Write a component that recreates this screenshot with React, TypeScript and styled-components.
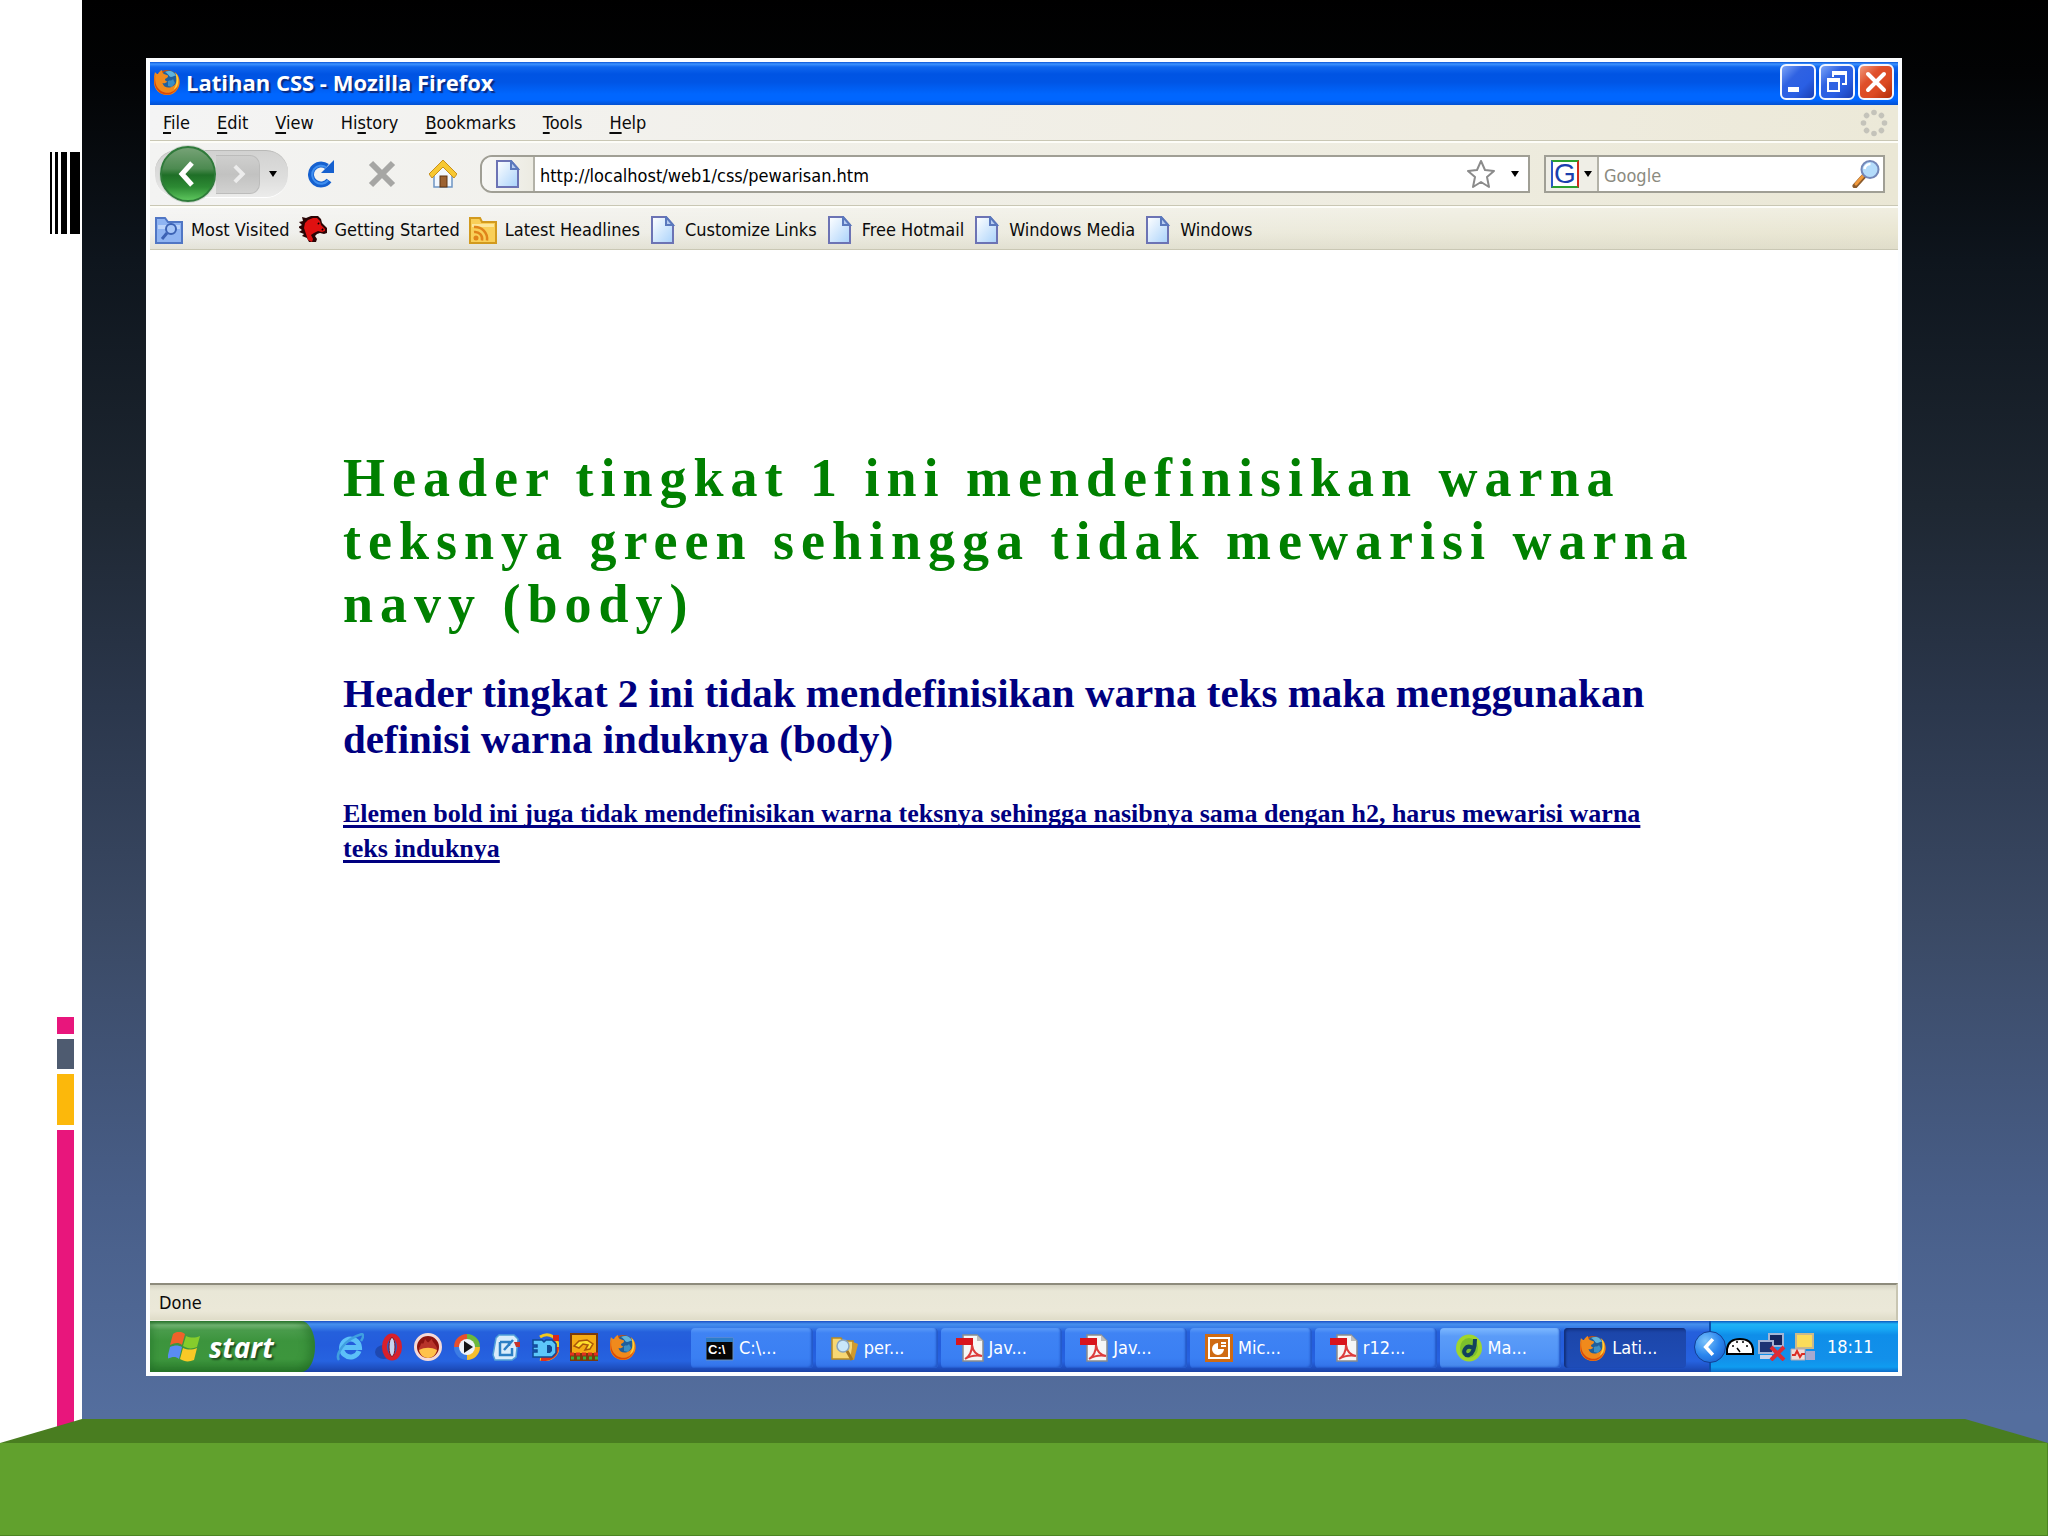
import React from 'react';
import styled, { createGlobalStyle, css } from 'styled-components';

const uiFont = '"DejaVu Sans Condensed", "DejaVu Sans", sans-serif';

const GlobalStyle = createGlobalStyle`
  *, *::before, *::after { box-sizing: border-box; }
  html, body { margin: 0; padding: 0; }
  body { background: #60a02c; font-family: ${uiFont}; font-size: 18px; line-height: 22px; color: #0b0b0b; }
  button, input { font: inherit; color: inherit; border: 0; padding: 0; margin: 0; background: none; outline: none; }
  a { color: inherit; text-decoration: none; }
  svg { display: block; flex: none; }
`;

/* ---------- slide ---------- */

const Slide = styled.div`
  display: flex;
  flex-direction: column;
  min-height: 100vh;
`;

const Backdrop = styled.div`
  flex: 1;
  display: grid;
  grid-template-columns: 82px 1fr;
`;

const Rail = styled.aside`
  display: flex;
  flex-direction: column;
  background: #fff;
`;

const Barcode = styled.div`
  display: flex;
  gap: 3px;
  height: 82px;
  margin-top: 152px;
  padding-left: 50px;
`;

const BarcodeLine = styled.span<{ $w: number }>`
  width: ${(p) => p.$w}px;
  background: #000;
`;

const ColorStack = styled.div`
  flex: 1;
  display: flex;
  flex-direction: column;
  gap: 5px;
  width: 17px;
  margin: 783px 0 0 57px;
`;

const ColorBlock = styled.span<{ $h?: number; $c: string }>`
  ${(p) => (p.$h ? css`height: ${p.$h}px;` : css`flex: 1;`)}
  background: ${(p) => p.$c};
`;

const Stage = styled.main`
  display: flex;
  padding: 58px 146px 67px 64px;
  background: linear-gradient(#000 0, #020304 5%, #0e151d 18%, #1e2732 35%, #2b374c 49%, #3a4964 64%, #485e88 83%, #546e9e 98%);
`;

const Ledge = styled.div`
  height: 24px;
  margin-top: -24px;
  background: #497d20;
  clip-path: polygon(0 100%, 82px 0, calc(100% - 83px) 0, 100% 100%);
`;

const Floor = styled.footer`
  height: 93px;
  background: #61a12d;
  border-right: 1px solid #4c8423;
  border-bottom: 1px solid #4c8423;
`;

/* ---------- browser window ---------- */

const Window = styled.section`
  flex: 1;
  min-width: 0;
  display: flex;
  flex-direction: column;
  border: 4px solid #fbfdff;
  background: #fff;
`;

const TitleBar = styled.header`
  display: flex;
  align-items: center;
  gap: 5px;
  height: 43px;
  padding: 0 4px 3px 3px;
  background: linear-gradient(#0a55d8 0, #3d93ff 2px, #0f66ee 5px, #0054e3 12px, #0055e5 20px, #0066fe 32px, #0066ff 38px, #0450d0 43px);
`;

const WindowTitle = styled.h1`
  flex: 1;
  margin: 0;
  font: 700 22px/26px "Open Sans", "Noto Sans", sans-serif;
  color: #fff;
  text-shadow: 2px 2px 1px #0a2a80;
`;

const CaptionButton = styled.button<{ $close?: boolean }>`
  display: grid;
  place-items: center;
  width: 36px;
  height: 36px;
  border: 2px solid #f3f7ff;
  border-radius: 6px;
  background: ${(p) =>
    p.$close
      ? 'linear-gradient(135deg, #f0997c, #df4f2a 35%, #dc4a22 65%, #b22c08)'
      : 'linear-gradient(135deg, #7ba4f8, #2f62e2 35%, #2a5fe4 65%, #1a3fb4)'};
`;

const CaptionGroup = styled.div`
  display: flex;
  gap: 3px;
`;

const chromeRow = css`
  display: flex;
  align-items: center;
  border-bottom: 1px solid #c9c7b4;
`;

const MenuBar = styled.nav`
  ${chromeRow}
  height: 36px;
  justify-content: space-between;
  padding-right: 10px;
  background: linear-gradient(90deg, #f4f4f4, #efece0 75%, #ece9d8);
`;

const MenuList = styled.div`
  display: flex;
  gap: 1px;
`;

const MenuItem = styled.button`
  padding: 0 13px;
  white-space: nowrap;
`;

const Key = styled.span`
  text-decoration: underline;
  text-decoration-thickness: 2px;
  text-underline-offset: 3px;
  text-decoration-skip-ink: none;
`;

const NavBar = styled.div`
  ${chromeRow}
  height: 65px;
  padding: 0 13px 0 5px;
  border-top: 2px solid #fdfdf8;
  background: linear-gradient(90deg, #f3f3f2, #eeecdf 75%, #eae7d5);
`;

const HistoryGroup = styled.div`
  display: flex;
  align-items: center;
  width: 133px;
  height: 48px;
  border-top: 1px solid #b9b9b7;
  border-bottom: 1px solid #fff;
  border-radius: 22px;
  background: linear-gradient(#d2d2d1, #dededd 60%, #ececeb);
`;

const BackButton = styled.button`
  display: grid;
  place-items: center;
  flex: none;
  width: 56px;
  height: 56px;
  margin-left: 5px;
  border-radius: 50%;
  border: 2px solid #2f7a3a;
  background: linear-gradient(#76a276 0, #4c8a50 40%, #1f6f27 52%, #2c8a33 75%, #5cc45c 100%);
  box-shadow: 0 0 0 1px #cfd6cf;
`;

const ForwardButton = styled.button`
  display: grid;
  place-items: center;
  width: 44px;
  height: 39px;
  border: 1px solid #bcbcbb;
  border-left: 0;
  border-radius: 0 10px 10px 0;
  background: linear-gradient(#cfcfce, #c2c2c1 50%, #d2d2d1);
`;

const ArrowButton = styled.button`
  display: grid;
  place-items: center;
  align-self: stretch;
  width: 26px;
`;

const ToolGroup = styled.div`
  display: flex;
  gap: 33px;
  padding: 0 23px 0 19px;
`;

const ToolButton = styled.button`
  display: block;
`;

const AddressField = styled.label`
  flex: 1;
  display: flex;
  align-items: center;
  height: 38px;
  border: 2px solid #a09f95;
  border-radius: 12px 0 0 12px;
  overflow: hidden;
  background: #fff;
`;

const FieldTools = styled.span`
  display: flex;
  align-items: center;
  gap: 7px;
`;

const SiteBadge = styled.span`
  display: grid;
  place-items: center;
  align-self: stretch;
  width: 53px;
  border-right: 2px solid #b3b2a8;
  background: linear-gradient(90deg, #f7f7f5, #ecebe2);
`;

const FieldInput = styled.input`
  flex: 1;
  min-width: 0;
  height: 34px;
  padding: 2px 0 0 5px;
  color: #000;
  &::placeholder { color: #8b8b80; opacity: 1; }
`;

const SearchField = styled.div`
  display: flex;
  align-items: center;
  width: 341px;
  height: 38px;
  margin-left: 14px;
  border: 2px solid #a09f95;
  background: #fff;
`;

const EngineButton = styled.button`
  display: flex;
  align-items: center;
  gap: 5px;
  align-self: stretch;
  padding: 0 5px;
  border-right: 2px solid #b3b2a8;
  background: #efeee6;
`;

const GoogleBadge = styled.span`
  width: 28px;
  height: 28px;
  border: 2px solid;
  border-color: #2ba02e #d22a1c #2ba02e #2b55c8;
  background: #fff;
  color: #1b3fae;
  font: 400 28px/24px "Liberation Sans", Arial, sans-serif;
  text-align: center;
`;

const GoButton = styled.button`
  padding-right: 3px;
`;

const BookmarkBar = styled.nav`
  ${chromeRow}
  height: 44px;
  gap: 9px;
  padding: 2px 5px 0;
  border-top: 2px solid #fdfdf8;
  background: linear-gradient(#ffffff55, #ffffff00 60%, #d8d6c488), linear-gradient(90deg, #f1f1ef, #ebe9d9 75%, #e9e6d2);
`;

const Bookmark = styled.a`
  display: flex;
  align-items: center;
  gap: 8px;
  white-space: nowrap;
`;

/* ---------- document ---------- */

const Document = styled.article`
  flex: 1;
  padding: 197px 193px 40px;
  background: #fff;
  color: #000080;
  font-family: "Liberation Serif", "Times New Roman", serif;
`;

const Heading1 = styled.h1`
  margin: 0 0 34px;
  color: #008000;
  font-size: 54px;
  line-height: 63px;
  letter-spacing: 7px;
`;

const Heading2 = styled.h2`
  margin: 0 0 34px;
  font-size: 41px;
  line-height: 46px;
`;

const BoldText = styled.b`
  display: block;
  padding-right: 32px;
  font-size: 26px;
  line-height: 35px;
  text-decoration: underline;
  text-decoration-thickness: 3px;
  text-underline-offset: 3px;
  text-decoration-skip-ink: none;
`;

const StatusBar = styled.div`
  display: flex;
  align-items: center;
  height: 38px;
  padding: 0 9px;
  border-top: 2px solid #8d8b7c;
  border-right: 2px solid #c8c5b2;
  border-bottom: 1px solid #f4f3ea;
  background: linear-gradient(#d4d2c2 0, #e9e7d7 6px, #ebe8d8 26px, #dfdcc8 100%);
`;

/* ---------- taskbar ---------- */

const Taskbar = styled.div`
  display: flex;
  height: 51px;
  background: linear-gradient(#1b4fc4 0, #4590ee 3px, #3a80e8 6px, #2560dc 11px, #245cdc 24px, #2663e0 40px, #1e4fc0 47px, #1941a5 100%);
`;

const StartButton = styled.button`
  display: flex;
  align-items: center;
  gap: 8px;
  width: 165px;
  padding-left: 18px;
  border-radius: 0 14px 14px 0 / 0 26px 26px 0;
  background: linear-gradient(#2f7a33 0, #76b877 4px, #4a9c4c 9px, #3c943d 20px, #3d963d 38px, #2a7a2c 100%);
  box-shadow: inset -6px 0 8px #1f6a2488, inset 4px 0 5px #1f6a2444;
  color: #fff;
  font: italic 700 28px/34px "Open Sans", "Noto Sans", sans-serif;
  text-shadow: 2px 2px 2px #1c4a1e;
`;

const QuickLaunch = styled.div`
  display: flex;
  align-items: center;
  gap: 11px;
  padding: 0 54px 0 21px;
`;

const Tasks = styled.div`
  flex: 1;
  display: flex;
  gap: 3px;
  padding: 7px 23px 4px 0;
`;

const toneFill = {
  normal: 'linear-gradient(#5b9bf8 0, #3f83f4 5px, #3a7ff3 30px, #3272e8 100%)',
  alert: 'linear-gradient(#7db8ff 0, #5b9cf8 8px, #4f92f6 30px, #4586ea 100%)',
  active: 'linear-gradient(#16388e 0, #1c46aa 5px, #1e4bb3 30px, #1e4cb8 100%)',
};
type Tone = keyof typeof toneFill;

const TaskButton = styled.button<{ $tone: Tone }>`
  flex: 1;
  min-width: 0;
  display: flex;
  align-items: center;
  gap: 5px;
  padding-left: 15px;
  border-radius: 4px;
  background: ${(p) => toneFill[p.$tone]};
  box-shadow: inset ${(p) => (p.$tone === 'active' ? '2px 1px 2px #12307c' : '-2px -1px 2px #2358c8')};
  color: #fff;
`;

const Tray = styled.div`
  position: relative;
  display: flex;
  align-items: center;
  gap: 4px;
  width: 189px;
  padding-left: 15px;
  border-left: 2px solid #0c4fae;
  background: linear-gradient(#0c58be 0, #1fb3f6 3px, #18a8f4 8px, #0f8ee9 14px, #1290ea 38px, #0f9cf0 46px, #0e6cc8 100%);
  color: #fff;
`;

const TrayToggle = styled.button`
  position: absolute;
  left: -17px;
  top: 10px;
  display: grid;
  place-items: center;
  width: 32px;
  height: 32px;
  border-radius: 50%;
  border: 1px solid #123f94;
  background: radial-gradient(circle at 35% 30%, #7cc4fb, #2a86ee 50%, #1554c4);
`;

const Clock = styled.time`
  margin-left: 5px;
`;

/* ---------- icons ---------- */

const Svg = ({ s = 28, children }: { s?: number; children: React.ReactNode }) => (
  <svg width={s} height={s} viewBox="0 0 28 28" aria-hidden="true">{children}</svg>
);

const FirefoxIcon = () => (
  <Svg>
    <circle cx="14" cy="14.500" r="12.500" fill="#c8500c" />
    <circle cx="16" cy="12" r="9.500" fill="#1f5f9c" />
    <path d="M12 4c5-2.500 10 0 11 4-2-1-3 1-5 1s-2-3-6-5z" fill="#5fb4dc" />
    <path d="M15 13c2-1 4 0 5-2l2 4-3 4-4-1z" fill="#3c8fc4" />
    <path d="M2 4c1 1.500 2 2 3 2 1-2 2.500-3.500 4-4 0 2 .5 3 2 4l4 1.500c.5 1.500-1 2.500-3 3.500 0 2 1 2 2.500 2.500-2 2.500-5 1.500-5 1.500 1 4 5 5.500 9 4 4-1.500 5.500-5 5-9 0-3-1-4.500-2-6 4 2.500 5.500 7 5 11.500C25.500 22.500 20 27.500 13.500 27 6 26.500 1 21 1 14 1 10 1 7 2 4z" fill="#f08a1c" />
    <path d="M2.500 6C1.500 12 2 19 8 23c6 3.500 13 2 17-5-2 6-7 9-12 8.500C6 26 1.500 20 1.500 14c0-3 .3-5.500 1-8z" fill="#d9480b" />
    <path d="M22.500 5c3 3 3.500 8 2 12-1 3-3 4-4 4.500 3-4 4-9 2-16.500z" fill="#ffd23a" />
  </Svg>
);

const MinimizeGlyph = () => (<Svg><rect x="4" y="19" width="11" height="5" fill="#fff" /></Svg>);
const RestoreGlyph = () => (
  <Svg>
    <path d="M10 9V5h13v11h-4" fill="none" stroke="#fff" strokeWidth="2" />
    <path d="M9 5h15" stroke="#fff" strokeWidth="4" />
    <rect x="5" y="12" width="11" height="11" fill="#2f62e2" stroke="#fff" strokeWidth="2" />
    <path d="M4 12h13" stroke="#fff" strokeWidth="4" />
  </Svg>
);
const CloseGlyph = () => (<Svg><path d="M6 6l16 16M22 6L6 22" stroke="#fff" strokeWidth="4" strokeLinecap="round" /></Svg>);

const Throbber = () => (
  <Svg>
    {[0, 45, 90, 135, 180, 225, 270, 315].map((a) => (
      <circle key={a} cx="14" cy="3.500" r="2.800" fill="#c4c3ba" transform={`rotate(${a} 14 14)`} />
    ))}
  </Svg>
);

const Chevron = ({ dir, s = 28, c = '#fff' }: { dir: 'l' | 'r'; s?: number; c?: string }) => (
  <Svg s={s}><path d={dir === 'l' ? 'M18 3L8 14l10 11' : 'M10 4l10 10-10 10'} fill="none" stroke={c} strokeWidth="5" /></Svg>
);

const DownArrow = () => (<svg width="8" height="6" viewBox="0 0 8 6" aria-hidden="true"><path d="M0 0h8L4 6z" fill="#000" /></svg>);

const ReloadIcon = () => (
  <Svg>
    <path d="M22 20.500A10 10 0 1 1 20 6.500" fill="none" stroke="#1560cf" strokeWidth="6" />
    <path d="M27 0v13H14z" fill="#1560cf" />
    <path d="M21 20.500A9 9 0 1 1 19.500 7.500" fill="none" stroke="#3f8ff0" strokeWidth="2" />
  </Svg>
);
const StopIcon = () => (<Svg><path d="M3 3l22 22M25 3L3 25" stroke="#a6a6a4" strokeWidth="6" /></Svg>);
const HomeIcon = () => (
  <Svg>
    <path d="M5 12L14 5l9 7v15H5z" fill="#f2f8ff" stroke="#6f95c4" strokeWidth="1.500" />
    <rect x="11" y="16" width="7" height="11" fill="#9c6232" stroke="#5e3513" />
    <path d="M14 0L0 14l3 4L14 7l11 11 3-4z" fill="#f7c832" stroke="#c8901c" strokeWidth="1" />
  </Svg>
);
const PageIcon = () => (
  <Svg>
    <defs>
      <linearGradient id="pg" x1="0" y1="0" x2="1" y2="1"><stop offset="0" stopColor="#fff" /><stop offset="1" stopColor="#a9d2fb" /></linearGradient>
    </defs>
    <path d="M3 1h14l7 8v18H3z" fill="url(#pg)" stroke="#6c73b4" strokeWidth="2" />
    <path d="M17 1v8h7z" fill="#b7cdf2" stroke="#5a78bd" strokeWidth="2" />
  </Svg>
);
const StarIcon = () => (
  <Svg><path d="M14 1l4 9 9 1-7 6 2 10-8-5-8 5 2-10-7-6 9-1z" fill="#fff" stroke="#8b8b8b" strokeWidth="2" strokeLinejoin="round" /></Svg>
);
const MagnifierIcon = () => (
  <Svg>
    <path d="M3 26l9-10" stroke="#8a5a2c" strokeWidth="5" strokeLinecap="round" />
    <path d="M4 24l7-8" stroke="#f29a3c" strokeWidth="3" strokeLinecap="round" />
    <circle cx="18" cy="9.500" r="8.500" fill="#b4dcfb" stroke="#7487b8" strokeWidth="2" />
    <path d="M12.500 9a6 6 0 0 1 6-5" fill="none" stroke="#fff" strokeWidth="2.500" />
  </Svg>
);
const SearchFolderIcon = () => (
  <Svg>
    <path d="M1 2h9l3 4h14v21H1z" fill="#8fb4f2" stroke="#5076c4" strokeWidth="2" />
    <path d="M3 9h22v4H3z" fill="#bcd4fa" />
    <circle cx="16" cy="13" r="5" fill="#a8c7f8" stroke="#3c62b4" strokeWidth="2" />
    <path d="M12 17l-5 6" stroke="#3c62b4" strokeWidth="3" />
  </Svg>
);
const RssFolderIcon = () => (
  <Svg>
    <path d="M1 2h10l2 4h14v21H1z" fill="#f9cf58" stroke="#d29a1e" strokeWidth="2" />
    <path d="M3 8h22v3H3z" fill="#fde79a" />
    <circle cx="7" cy="22" r="2.500" fill="#e0841a" />
    <path d="M5 16a7 7 0 0 1 8 8.500M5 11a12 12 0 0 1 13 13.500" fill="none" stroke="#e0841a" strokeWidth="2.500" />
  </Svg>
);
const DinoIcon = () => (
  <Svg>
    <path d="M7 2l5-2h7l3 3 1 4 5 5v5l-3 1-4-1-3 1-2 2 2 3-1 3h-7l-2-4-5-2 2-2-5-2 3-2-4-3 4-2-3-3 4-1-1-4 4 1z" fill="#2a0505" />
    <path d="M9 4l5-2h4l3 3 1 4 4 4v2l-3 1-4-1-4 2-3 2 2 4-1 3-4-2-2-6-2-6 1-5z" fill="#e01010" />
    <path d="M19 7l1 1M23 13l1 1" stroke="#000" strokeWidth="2" />
  </Svg>
);

const WindowsFlag = () => (
  <svg width="33" height="30" viewBox="0 0 33 30" aria-hidden="true">
    <path d="M5 2c4-3 8-3 12 0l-3 11c-4-3-7-2-12 0z" fill="#f0622a" />
    <path d="M18 4c5 2 9 2 14 0l-3 11c-5 2-9 2-14-1z" fill="#86cc2c" />
    <path d="M2 15c5-2 8-2 12 0l-3 12c-4-3-7-2-12 0z" fill="#5a8cf4" />
    <path d="M15 16c5 2 9 2 14 0l-3 12c-5 2-9 2-14-1z" fill="#f9c926" />
  </svg>
);

const IeIcon = () => (
  <Svg>
    <path d="M23 18A9 9 0 1 1 23.500 14.500H8" fill="none" stroke="#5cc0f8" strokeWidth="5" />
    <path d="M3 27C-1 22 8 6 26 1c2 1 1 4-1 7" fill="none" stroke="#3f9fe0" strokeWidth="2.500" />
  </Svg>
);
const OperaIcon = () => (
  <Svg>
    <ellipse cx="9" cy="19" rx="9" ry="7" fill="#1c3f9c" opacity="0.7" />
    <ellipse cx="17" cy="14" rx="7.500" ry="11" fill="#2c60c8" stroke="#d8202c" strokeWidth="5" />
    <ellipse cx="17" cy="14" rx="3" ry="9.500" fill="#c8d6f0" stroke="#8c0c14" strokeWidth="1" />
  </Svg>
);
const FlameIcon = () => (
  <Svg>
    <circle cx="14" cy="14" r="12.500" fill="#8c1410" stroke="#f6d9d6" strokeWidth="3" />
    <path d="M5 15c2-2 1-4 3-5 1 2 2 0 3-4 2 2 2 4 4 3 1-2 2-2 3-3 0 3 3 4 5 9v3a9.500 9.500 0 0 1-18 0z" fill="#b8342a" />
    <path d="M5 17c6-3 12-3 18 0-1 5-5 8-9 8s-8-3-9-8z" fill="#ffc24a" />
  </Svg>
);
const MediaPlayerIcon = () => (
  <Svg>
    <path d="M14 14V1A13 13 0 0 0 1 14z" fill="#e8502c" />
    <path d="M14 14V1a13 13 0 0 1 13 13z" fill="#6cb83c" />
    <path d="M14 14H1a13 13 0 0 0 13 13z" fill="#3c7ce4" />
    <path d="M14 14h13a13 13 0 0 1-13 13z" fill="#f4be2c" />
    <circle cx="14" cy="14" r="8" fill="#eef3f8" />
    <path d="M11 8l9 6-9 6z" fill="#151515" />
  </Svg>
);
const DesktopIcon = () => (
  <Svg>
    <path d="M4 5l3-3h15l4 4-2 18-4 3H3L1 22z" fill="#d8ecfb" stroke="#4f9fd8" strokeWidth="1.500" />
    <path d="M8 9h9v4M8 9v13h12v-7M12 17l9-10" fill="none" stroke="#2b7fc4" strokeWidth="2.500" />
    <path d="M22 9h6v5h-4z" fill="#c83228" />
  </Svg>
);
const ThreeDIcon = () => (
  <Svg>
    <path d="M9 4C18-2 28 5 27 15c-1 9-9 13-18 11" fill="none" stroke="#f2c81e" strokeWidth="3" />
    <path d="M26 14c0 8-7 13-16 12" fill="none" stroke="#e0301c" strokeWidth="4" />
    <path d="M22 2h6v6h-6z" fill="#d8281c" />
    <path d="M2 7h9l2 2 2-2h6l4 4v9l-4 4H2v-5h4v-2H2v-3h4v-2H2z" fill="#5cc6fa" stroke="#0f4a94" strokeWidth="1.500" />
    <path d="M16 12h3l2 2v4l-2 2h-3z" fill="#0f4a94" />
  </Svg>
);
const MosaicIcon = () => (
  <Svg>
    <path d="M0 0h28v28H0z" fill="#7a3a0c" />
    <path d="M2 2h24v18H2z" fill="#f5ac14" />
    <path d="M4 13l5-5 8-1 6 4-3 5-5 1 3-5-5-1-4 4z" fill="#ffe02c" stroke="#a8560a" strokeWidth="1.500" />
    <path d="M0 21h28" stroke="#e03020" strokeWidth="3" strokeDasharray="4 2" />
    <path d="M1 25h27" stroke="#3cae3c" strokeWidth="3" strokeDasharray="3 3" />
  </Svg>
);
const ConsoleIcon = () => (
  <Svg>
    <path d="M0 4h27v22H0z" fill="#050505" stroke="#6a8fb8" />
    <path d="M0 4h27v4H0z" fill="#2c7cc8" />
    <text x="2" y="20" fill="#fff" fontFamily="Liberation Sans" fontWeight="700" fontSize="13">C:\</text>
  </Svg>
);
const FolderIcon = () => (
  <Svg>
    <path d="M1 4h9l2 3h10v18H1z" fill="#f7d774" stroke="#b98a22" strokeWidth="1.500" />
    <path d="M22 8l5 2-4 16-4-1z" fill="#d29a2c" />
    <circle cx="12" cy="12" r="6" fill="#c8e6fa" stroke="#8aa4bc" strokeWidth="1.500" />
    <path d="M16 17l5 9" stroke="#a87820" strokeWidth="3" />
  </Svg>
);
const PdfIcon = () => (
  <Svg>
    <path d="M7 1h14l6 6v20H7z" fill="#f6f6f6" stroke="#8c8c8c" strokeWidth="1.500" />
    <path d="M21 1v6h6z" fill="#bdbdbd" />
    <path d="M0 4h17v7H0z" fill="#d8141c" />
    <path d="M9 25c5-3 7-8 7-14 1 7 4 10 10 11-6-1-12 0-17 3z" fill="none" stroke="#dc3c3c" strokeWidth="2" />
  </Svg>
);
const PowerPointIcon = () => (
  <Svg>
    <path d="M0 0h28v28H0z" fill="#cf6a12" />
    <path d="M4 4h20v20H4z" fill="none" stroke="#fff" strokeWidth="2" />
    <path d="M13 9v6h6a6 6 0 1 1-6-6z" fill="#fff" />
    <path d="M16 9h5M16 12h5" stroke="#fff" strokeWidth="2" />
  </Svg>
);
const DreamweaverIcon = () => (
  <Svg>
    <ellipse cx="14" cy="14" rx="13" ry="13.500" fill="#9fd62c" />
    <ellipse cx="14" cy="14" rx="9" ry="10" fill="#7cc02c" />
    <path d="M20 5c0 8-1 14-6 16-4 1-6-3-4-6s5-3 8-1" fill="none" stroke="#12415c" strokeWidth="4" />
  </Svg>
);
const DriveIcon = () => (
  <Svg>
    <path d="M1 21v-5C2 9 7 6 14 6s12 3 13 10v5z" fill="#fff" stroke="#000" strokeWidth="2" />
    <path d="M6 13h2M10 9h2M16 9h2M20 13h2M14 19l-3-4" stroke="#000" strokeWidth="1.500" />
  </Svg>
);
const NetworkIcon = () => (
  <Svg>
    <path d="M11 1h14v12H11z" fill="#14245c" stroke="#a3b4d4" strokeWidth="2" />
    <path d="M1 8h14v12H1z" fill="#1c3474" stroke="#a3b4d4" strokeWidth="2" />
    <path d="M2 22h12v4H2z" fill="#c8d2e8" />
    <path d="M13 14l13 13M26 14L13 27" stroke="#dc2c34" strokeWidth="4" />
  </Svg>
);
const MonitorIcon = () => (
  <Svg>
    <path d="M6 1h17v14H6z" fill="#fbdc5a" stroke="#c9b88c" strokeWidth="2" />
    <path d="M1 16h14v11H1z" fill="#f0dcd8" stroke="#b0a8b4" strokeWidth="1" />
    <path d="M2 22h3l2-4 3 6 2-3h3" fill="none" stroke="#dc2c24" strokeWidth="2" />
    <path d="M16 18h9v9h-9z" fill="#a7a9cf" />
  </Svg>
);

/* ---------- data ---------- */

const menus: [string, string, string][] = [
  ['', 'F', 'ile'], ['', 'E', 'dit'], ['', 'V', 'iew'], ['Hi', 's', 'tory'],
  ['', 'B', 'ookmarks'], ['', 'T', 'ools'], ['', 'H', 'elp'],
];

const bookmarks = [
  { label: 'Most Visited', Icon: SearchFolderIcon },
  { label: 'Getting Started', Icon: DinoIcon },
  { label: 'Latest Headlines', Icon: RssFolderIcon },
  { label: 'Customize Links', Icon: PageIcon },
  { label: 'Free Hotmail', Icon: PageIcon },
  { label: 'Windows Media', Icon: PageIcon },
  { label: 'Windows', Icon: PageIcon },
];

const launchers = [
  { name: 'Internet Explorer', Icon: IeIcon },
  { name: 'Opera', Icon: OperaIcon },
  { name: 'Burner', Icon: FlameIcon },
  { name: 'Media Player', Icon: MediaPlayerIcon },
  { name: 'Show Desktop', Icon: DesktopIcon },
  { name: '3D', Icon: ThreeDIcon },
  { name: 'Mosaic', Icon: MosaicIcon },
  { name: 'Firefox', Icon: FirefoxIcon },
];

const tasks: { label: string; Icon: () => React.JSX.Element; tone: Tone }[] = [
  { label: 'C:\\...', Icon: ConsoleIcon, tone: 'normal' },
  { label: 'per...', Icon: FolderIcon, tone: 'normal' },
  { label: 'Jav...', Icon: PdfIcon, tone: 'normal' },
  { label: 'Jav...', Icon: PdfIcon, tone: 'normal' },
  { label: 'Mic...', Icon: PowerPointIcon, tone: 'normal' },
  { label: 'r12...', Icon: PdfIcon, tone: 'normal' },
  { label: 'Ma...', Icon: DreamweaverIcon, tone: 'alert' },
  { label: 'Lati...', Icon: FirefoxIcon, tone: 'active' },
];

export default function App() {
  return (
    <>
      <GlobalStyle />
      <Slide>
        <Backdrop>
          <Rail>
            <Barcode>
              <BarcodeLine $w={2} />
              <BarcodeLine $w={3} />
              <BarcodeLine $w={6} />
              <BarcodeLine $w={10} />
            </Barcode>
            <ColorStack>
              <ColorBlock $h={17} $c="#e8167c" />
              <ColorBlock $h={30} $c="#4e5b70" />
              <ColorBlock $h={51} $c="#fcb80b" />
              <ColorBlock $c="#e8167c" />
            </ColorStack>
          </Rail>
          <Stage>
            <Window>
              <TitleBar>
                <FirefoxIcon />
                <WindowTitle>Latihan CSS - Mozilla Firefox</WindowTitle>
                <CaptionGroup>
                  <CaptionButton aria-label="Minimize"><MinimizeGlyph /></CaptionButton>
                  <CaptionButton aria-label="Restore"><RestoreGlyph /></CaptionButton>
                  <CaptionButton aria-label="Close" $close><CloseGlyph /></CaptionButton>
                </CaptionGroup>
              </TitleBar>
              <MenuBar>
                <MenuList>
                  {menus.map(([pre, key, post]) => (
                    <MenuItem key={key + post}>{pre}<Key>{key}</Key>{post}</MenuItem>
                  ))}
                </MenuList>
                <Throbber />
              </MenuBar>
              <NavBar>
                <HistoryGroup>
                  <BackButton aria-label="Back"><Chevron dir="l" /></BackButton>
                  <ForwardButton aria-label="Forward"><Chevron dir="r" s={22} c="#ececec" /></ForwardButton>
                  <ArrowButton aria-label="Recent pages"><DownArrow /></ArrowButton>
                </HistoryGroup>
                <ToolGroup>
                  <ToolButton aria-label="Reload"><ReloadIcon /></ToolButton>
                  <ToolButton aria-label="Stop"><StopIcon /></ToolButton>
                  <ToolButton aria-label="Home"><HomeIcon /></ToolButton>
                </ToolGroup>
                <AddressField>
                  <SiteBadge><PageIcon /></SiteBadge>
                  <FieldInput aria-label="Address" defaultValue="http://localhost/web1/css/pewarisan.htm" />
                  <FieldTools>
                    <ToolButton aria-label="Bookmark this page"><StarIcon /></ToolButton>
                    <ArrowButton aria-label="Show history"><DownArrow /></ArrowButton>
                  </FieldTools>
                </AddressField>
                <SearchField>
                  <EngineButton aria-label="Search engine">
                    <GoogleBadge>G</GoogleBadge>
                    <DownArrow />
                  </EngineButton>
                  <FieldInput aria-label="Search" placeholder="Google" />
                  <GoButton aria-label="Search the web"><MagnifierIcon /></GoButton>
                </SearchField>
              </NavBar>
              <BookmarkBar>
                {bookmarks.map(({ label, Icon }) => (
                  <Bookmark key={label} href="#"><Icon />{label}</Bookmark>
                ))}
              </BookmarkBar>
              <Document>
                <Heading1>Header tingkat 1 ini mendefinisikan warna teksnya green sehingga tidak mewarisi warna navy (body)</Heading1>
                <Heading2>Header tingkat 2 ini tidak mendefinisikan warna teks maka menggunakan definisi warna induknya (body)</Heading2>
                <BoldText>Elemen bold ini juga tidak mendefinisikan warna teksnya sehingga nasibnya sama dengan h2, harus mewarisi warna teks induknya</BoldText>
              </Document>
              <StatusBar>Done</StatusBar>
              <Taskbar>
                <StartButton><WindowsFlag />start</StartButton>
                <QuickLaunch>
                  {launchers.map(({ name, Icon }) => (
                    <ToolButton key={name} aria-label={name}><Icon /></ToolButton>
                  ))}
                </QuickLaunch>
                <Tasks>
                  {tasks.map(({ label, Icon, tone }, i) => (
                    <TaskButton key={i} $tone={tone}><Icon />{label}</TaskButton>
                  ))}
                </Tasks>
                <Tray>
                  <TrayToggle aria-label="Show hidden icons"><Chevron dir="l" s={20} /></TrayToggle>
                  <DriveIcon />
                  <NetworkIcon />
                  <MonitorIcon />
                  <Clock>18:11</Clock>
                </Tray>
              </Taskbar>
            </Window>
          </Stage>
        </Backdrop>
        <Ledge />
        <Floor />
      </Slide>
    </>
  );
}
